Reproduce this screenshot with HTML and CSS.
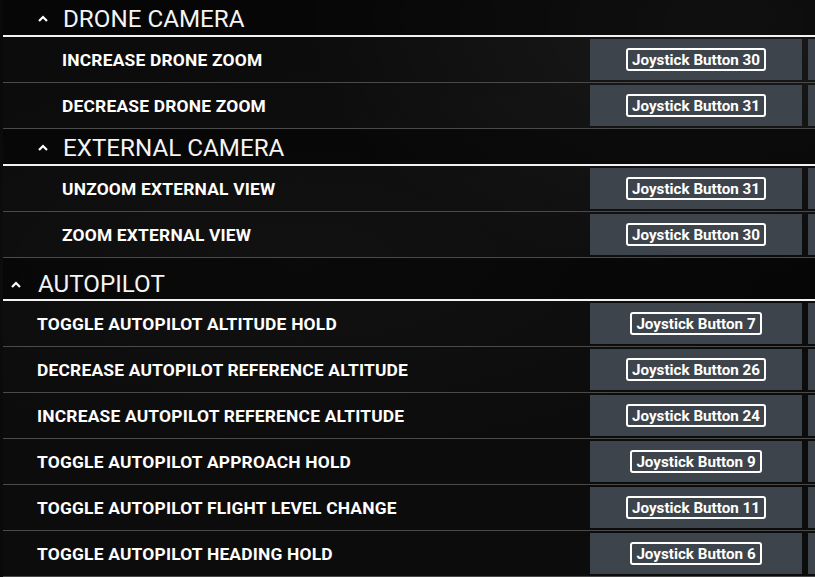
FILE: index.html
```html
<!DOCTYPE html>
<html lang="en">
<head>
    <meta charset="UTF-8">
    <meta name="viewport" content="width=device-width, initial-scale=1.0">
    <title>Controls</title>
    <link rel="stylesheet" href="styles.css">
</head>
<body>

    <div class="list">
        <!-- Drone camera -->
        <div class="section-head sub">
            <svg class="chevron" width="10" height="7" viewBox="0 0 10 7"><polyline points="1,6 5,2 9,6" fill="none" stroke="#fff" stroke-width="2.2"/></svg>
            <span class="section-title">DRONE CAMERA</span>
        </div>
        <div class="row sub">
            <div class="label">INCREASE DRONE ZOOM</div>
            <div class="cell"><span class="badge">Joystick Button 30</span></div>
            <div class="cell"></div>
        </div>
        <div class="row sub">
            <div class="label">DECREASE DRONE ZOOM</div>
            <div class="cell"><span class="badge">Joystick Button 31</span></div>
            <div class="cell"></div>
        </div>

        <!-- External camera -->
        <div class="section-head sub">
            <svg class="chevron" width="10" height="7" viewBox="0 0 10 7"><polyline points="1,6 5,2 9,6" fill="none" stroke="#fff" stroke-width="2.2"/></svg>
            <span class="section-title">EXTERNAL CAMERA</span>
        </div>
        <div class="row sub">
            <div class="label">UNZOOM EXTERNAL VIEW</div>
            <div class="cell"><span class="badge">Joystick Button 31</span></div>
            <div class="cell"></div>
        </div>
        <div class="row sub">
            <div class="label">ZOOM EXTERNAL VIEW</div>
            <div class="cell"><span class="badge">Joystick Button 30</span></div>
            <div class="cell"></div>
        </div>

        <!-- Autopilot -->
        <div class="section-head top">
            <svg class="chevron" width="10" height="7" viewBox="0 0 10 7"><polyline points="1,6 5,2 9,6" fill="none" stroke="#fff" stroke-width="2.2"/></svg>
            <span class="section-title">AUTOPILOT</span>
        </div>
        <div class="row">
            <div class="label">TOGGLE AUTOPILOT ALTITUDE HOLD</div>
            <div class="cell"><span class="badge">Joystick Button 7</span></div>
            <div class="cell"></div>
        </div>
        <div class="row">
            <div class="label">DECREASE AUTOPILOT REFERENCE ALTITUDE</div>
            <div class="cell"><span class="badge">Joystick Button 26</span></div>
            <div class="cell"></div>
        </div>
        <div class="row">
            <div class="label">INCREASE AUTOPILOT REFERENCE ALTITUDE</div>
            <div class="cell"><span class="badge">Joystick Button 24</span></div>
            <div class="cell"></div>
        </div>
        <div class="row">
            <div class="label">TOGGLE AUTOPILOT APPROACH HOLD</div>
            <div class="cell"><span class="badge">Joystick Button 9</span></div>
            <div class="cell"></div>
        </div>
        <div class="row">
            <div class="label">TOGGLE AUTOPILOT FLIGHT LEVEL CHANGE</div>
            <div class="cell"><span class="badge">Joystick Button 11</span></div>
            <div class="cell"></div>
        </div>
        <div class="row">
            <div class="label">TOGGLE AUTOPILOT HEADING HOLD</div>
            <div class="cell"><span class="badge">Joystick Button 6</span></div>
            <div class="cell"></div>
        </div>
    </div>

</body>
</html>
```

FILE: styles.css
```css
body {
    margin: 0;
    width: 815px;
    height: 577px;
    overflow: hidden;
    font-family: Roboto, "Liberation Sans", sans-serif;
    color: #fff;
    background-color: #0b0a0a;
    background-image:
        radial-gradient(ellipse 420px 260px at 720px 20px, rgba(255, 255, 255, 0.06), transparent),
        radial-gradient(ellipse 500px 200px at 300px 260px, rgba(255, 255, 255, 0.025), transparent);
}
.list {
    padding-left: 3px;
}
.section-head {
    display: flex;
    align-items: flex-end;
    border-bottom: 2px solid #f2f2f2;
    background-color: rgba(0, 0, 0, 0.35);
}
.section-head.sub {
    height: 31px;
    padding: 0 0 4px 35px;
}
.section-head.top {
    height: 38px;
    padding: 0 0 3px 8px;
}
.chevron {
    display: block;
    margin-bottom: 9px;
    margin-right: 15px;
}
.section-head.top .chevron {
    margin-bottom: 8px;
    margin-right: 17px;
}
.section-title {
    font-size: 24.2px;
    line-height: 24px;
    font-weight: 400;
    color: #f4f4f4;
}
.row {
    display: grid;
    grid-template-columns: 581px 212px 1fr;
    column-gap: 6px;
    height: 41px;
    padding: 2px 0;
    border-bottom: 1px solid #4a4a4a;
    background-color: rgba(255, 255, 255, 0.01);
}
.label {
    display: flex;
    align-items: center;
    padding-left: 34px;
    font-size: 17.4px;
    letter-spacing: 0.2px;
    font-weight: 700;
    color: #fff;
    white-space: nowrap;
}
.row.sub .label {
    padding-left: 59px;
}
.cell {
    display: flex;
    align-items: center;
    justify-content: center;
    background-color: #3d444c;
}
.badge {
    display: inline-block;
    padding: 0 4px;
    height: 19px;
    line-height: 20px;
    border: 2px solid #fff;
    border-radius: 3px;
    font-size: 15.2px;
    font-weight: 700;
    color: #fff;
}
```
